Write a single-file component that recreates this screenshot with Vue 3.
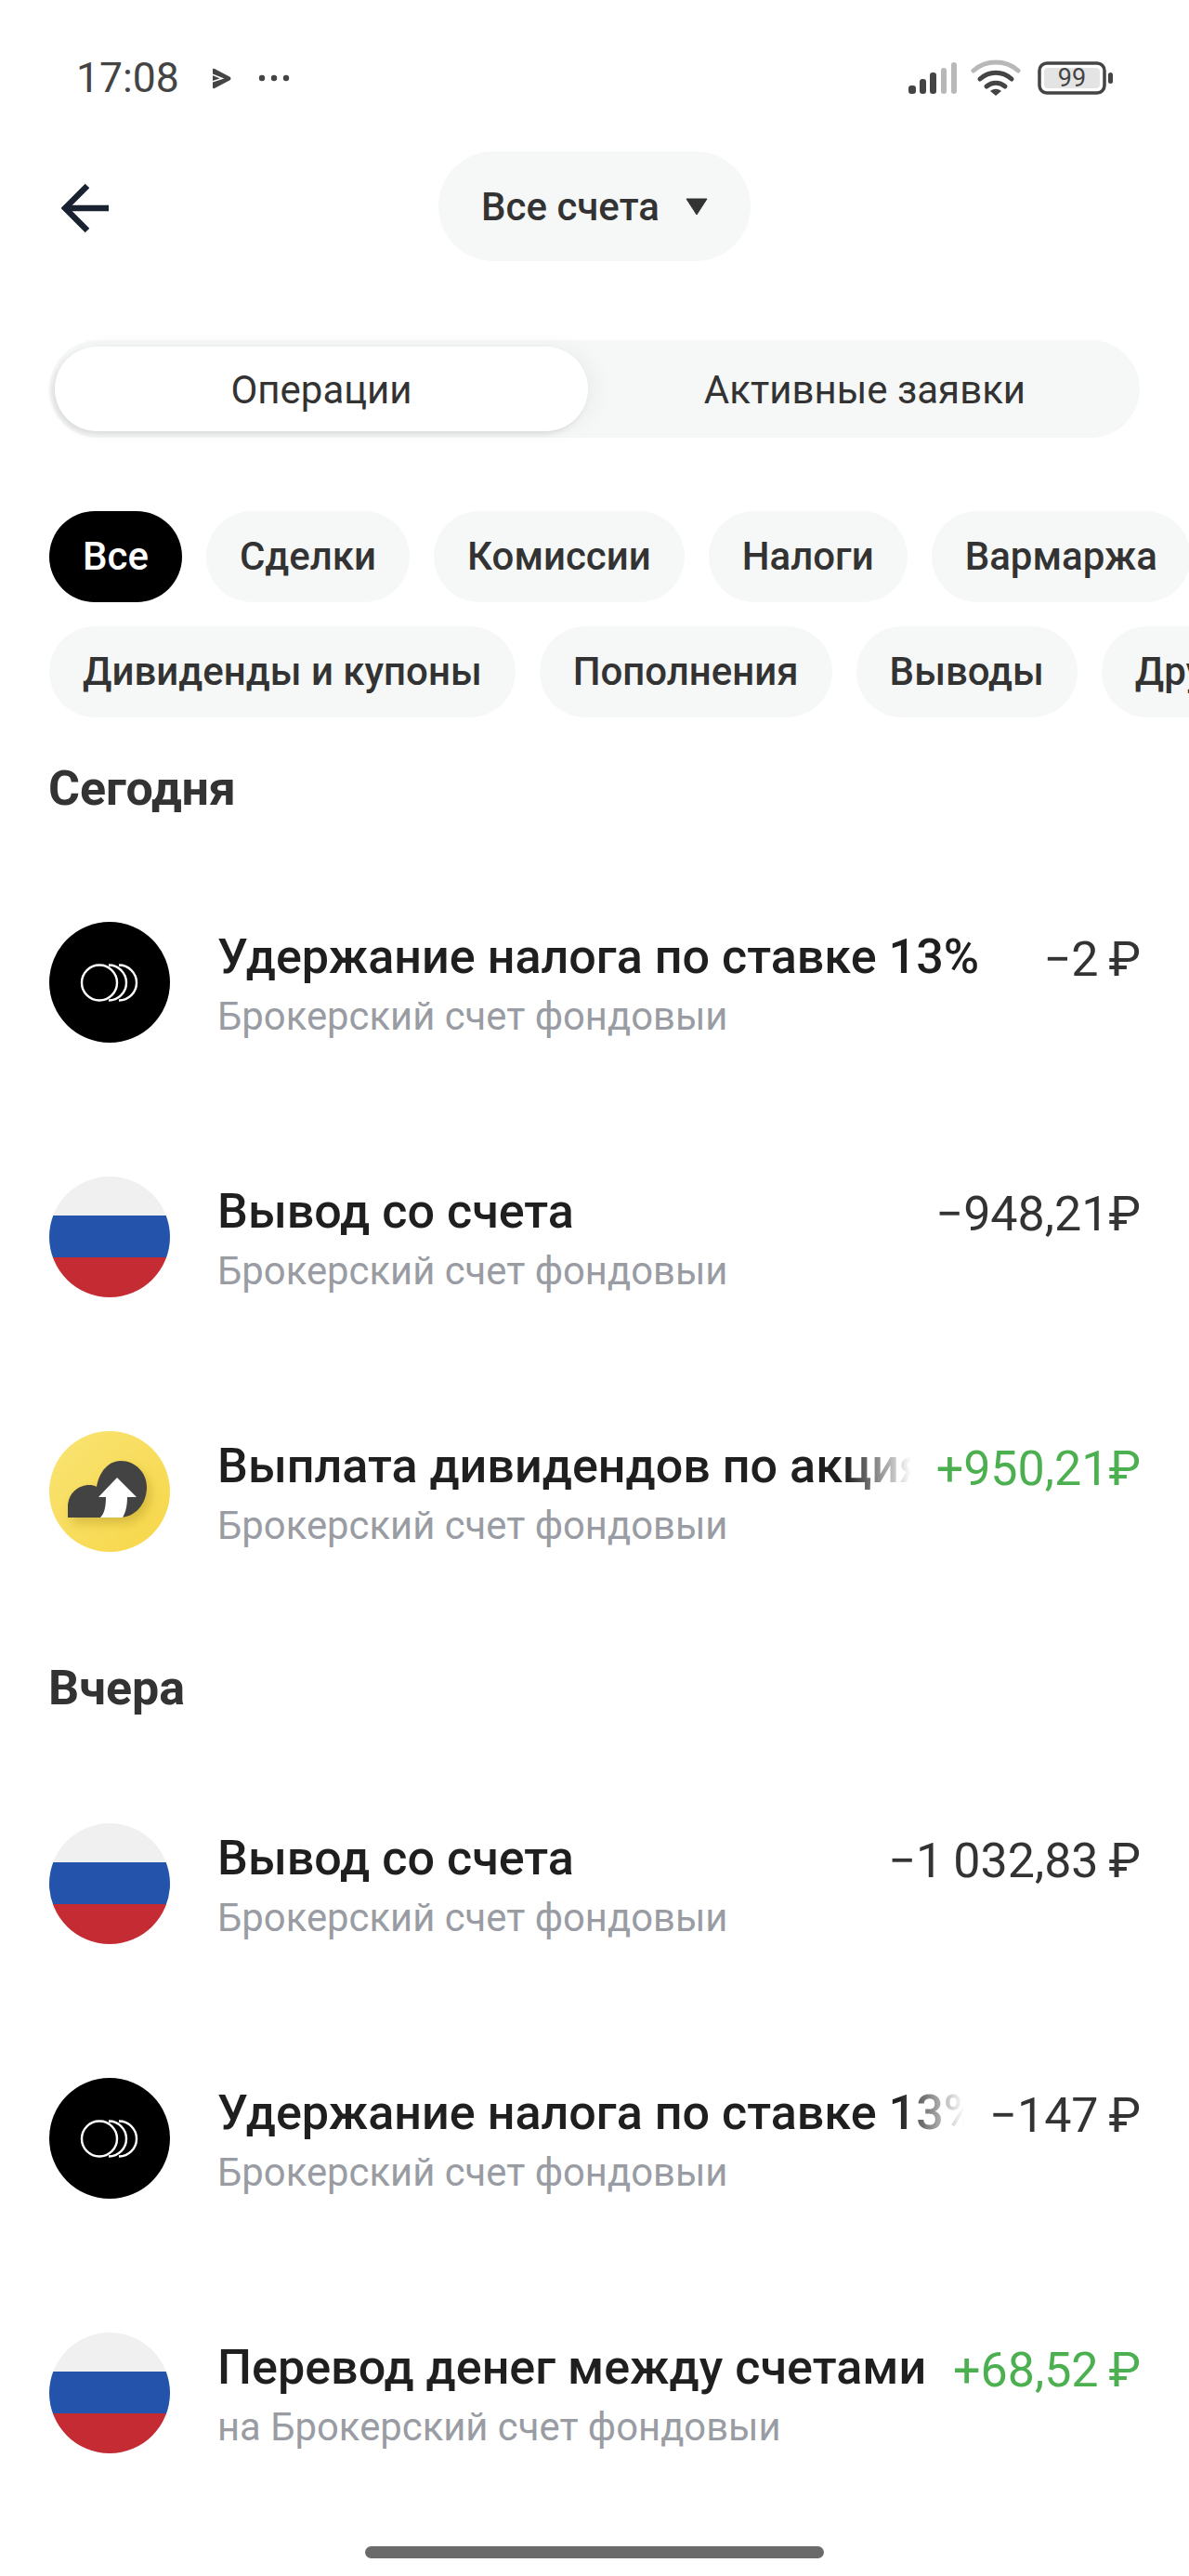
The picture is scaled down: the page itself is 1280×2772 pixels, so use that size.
<script setup>
const row1 = ['Все', 'Сделки', 'Комиссии', 'Налоги', 'Вармаржа']
const row2 = ['Дивиденды и купоны', 'Пополнения', 'Выводы', 'Другое']
const sections = [
  {
    title: 'Сегодня',
    rows: [
      { icon: 'coins', name: 'Удержание налога по ставке 13%', sub: 'Брокерский счет фондовыи', amount: '−2 ₽' },
      { icon: 'flag', name: 'Вывод со счета', sub: 'Брокерский счет фондовыи', amount: '−948,21₽' },
      { icon: 'cloud', name: 'Выплата дивидендов по акциям', sub: 'Брокерский счет фондовыи', amount: '+950,21₽', plus: true, fade: true },
    ],
  },
  {
    title: 'Вчера',
    rows: [
      { icon: 'flag', name: 'Вывод со счета', sub: 'Брокерский счет фондовыи', amount: '−1 032,83 ₽' },
      { icon: 'coins', name: 'Удержание налога по ставке 13%', sub: 'Брокерский счет фондовыи', amount: '−147 ₽', fade: true },
      { icon: 'flag', name: 'Перевод денег между счетами', sub: 'на Брокерский счет фондовыи', amount: '+68,52 ₽', plus: true },
    ],
  },
]
</script>

<template>
  <div class="page">
    <div class="status">
      <span class="time">17:08</span>
      <svg class="play" width="21" height="23" viewBox="0 0 21 23">
        <path d="M1 2 Q1 0 3 1 L20 10 Q21 11.500 20 13 L3 22 Q1 23 1 21Z" fill="#444"/>
        <path d="M0 7 L11 11.500 L0 15" fill="none" stroke="#fff" stroke-width="1.600"/>
      </svg>
      <svg class="dots" width="34" height="8" viewBox="0 0 34 8"><circle cx="4" cy="4" r="3.200" fill="#444"/><circle cx="17" cy="4" r="3.200" fill="#444"/><circle cx="30" cy="4" r="3.200" fill="#444"/></svg>
      <span class="spacer"></span>
      <svg width="53" height="34" viewBox="0 0 53 34">
        <rect x="0" y="25" width="8" height="9" rx="3" fill="#444"/>
        <rect x="12" y="18" width="7" height="16" rx="3" fill="#444"/>
        <rect x="23" y="11" width="7" height="23" rx="3" fill="#444"/>
        <rect x="35" y="6" width="6" height="28" rx="3" fill="#b8b8b8"/>
        <rect x="46" y="0" width="6" height="34" rx="3" fill="#b8b8b8"/>
      </svg>
      <svg class="wifi" width="54" height="40" viewBox="0 0 54 40" fill="none" stroke-linecap="round">
        <path d="M3 12 C16 0 38 0 51 12" stroke="#b8b8b8" stroke-width="5"/>
        <path d="M10 21 C20 12 34 12 44 21" stroke="#444" stroke-width="5"/>
        <path d="M17 29 C23 24 31 24 37 29" stroke="#444" stroke-width="5"/>
        <path d="M27 39 L21 34 C25 31 29 31 33 34Z" fill="#444"/>
      </svg>
      <svg class="batt" width="82" height="36" viewBox="0 0 82 36">
        <rect x="2" y="2" width="70" height="32" rx="8" fill="#fff" stroke="#444" stroke-width="3.500"/>
        <rect x="7" y="7" width="60" height="22" rx="4" fill="#e4e4e4"/>
        <text x="37" y="27" text-anchor="middle" class="batt-text">99</text>
        <rect x="76" y="12" width="5" height="12" rx="2.500" fill="#444"/>
      </svg>
    </div>

    <div class="nav">
      <svg class="back" width="54" height="54" viewBox="0 0 54 54" fill="none" stroke="#1a2130" stroke-width="6.500">
        <path d="M28 3 L4 27 L28 51"/>
        <path d="M4 27 H51"/>
      </svg>
      <div class="account">
        <span>Все счета</span>
        <svg width="24" height="19" viewBox="0 0 24 19"><path d="M1 1 H23 L12 18Z" fill="#333" stroke="#333" stroke-linejoin="round" stroke-width="1"/></svg>
      </div>
    </div>

    <div class="tabs">
      <div class="tab active">Операции</div>
      <div class="tab other">Активные заявки</div>
    </div>

    <div class="chips">
      <span v-for="(c, i) in row1" :key="c" class="chip" :class="{ on: i === 0 }">{{ c }}</span>
    </div>
    <div class="chips second">
      <span v-for="c in row2" :key="c" class="chip">{{ c }}</span>
    </div>

    <section v-for="s in sections" :key="s.title" class="section">
      <h2 class="heading">{{ s.title }}</h2>
      <div v-for="r in s.rows" :key="r.name + r.amount" class="row">
        <svg v-if="r.icon === 'coins'" class="ico" viewBox="0 0 130 130">
          <circle cx="65" cy="65" r="65" fill="#000"/>
          <g fill="none" stroke="#fff" stroke-width="2.400">
            <path d="M75 46.500 A19 19 0 0 1 75 84.500"/>
            <path d="M64 46.500 A19 19 0 0 1 64 84.500"/>
            <circle cx="54" cy="65.500" r="19"/>
          </g>
        </svg>
        <svg v-else-if="r.icon === 'flag'" class="ico" viewBox="0 0 130 130">
          <defs><clipPath id="fc"><circle cx="65" cy="65" r="65"/></clipPath></defs>
          <g clip-path="url(#fc)">
            <rect width="130" height="43" fill="#f0f0f0"/>
            <rect y="42" width="130" height="46" fill="#2353ab"/>
            <rect y="87" width="130" height="43" fill="#c42b32"/>
          </g>
        </svg>
        <svg v-else class="ico" viewBox="0 0 130 130">
          <defs>
            <linearGradient id="gold" x1="0" y1="0" x2="1" y2="1"><stop offset="0" stop-color="#f9e474"/><stop offset="1" stop-color="#f7d648"/></linearGradient>
            <filter id="sh" x="-30%" y="-30%" width="160%" height="160%"><feGaussianBlur stdDeviation="6"/></filter>
          </defs>
          <circle cx="65" cy="65" r="65" fill="url(#gold)"/>
          <path d="M20 93 V82 C20 67 31 58 43 58 C46 58 49 58.500 51 60 C54 43 64 32 77 32 C93 32 105 45 105 60 C105 78 93 93 75 93Z" fill="#9a7f10" opacity=".35" filter="url(#sh)" transform="translate(4 6)"/>
          <path d="M20 93 V82 C20 67 31 58 43 58 C46 58 49 58.500 51 60 C54 43 64 32 77 32 C93 32 105 45 105 60 C105 78 93 93 75 93Z" fill="#434343"/>
          <path d="M73 50 L94 71 H84 C84 81 82 88 79 93 H55 C59 89 61 82 61 71 H53Z" fill="#fff"/>
        </svg>
        <div class="body">
          <div class="name" :class="{ fade: r.fade }">{{ r.name }}</div>
          <div class="sub">{{ r.sub }}</div>
        </div>
        <div class="amount" :class="{ plus: r.plus }">{{ r.amount }}</div>
      </div>
    </section>

    <div class="home"></div>
  </div>
</template>

<style>
html, body { margin: 0; background: #fff; }
</style>

<style scoped>
.page {
  width: 1280px;
  height: 2772px;
  overflow: hidden;
  position: relative;
  background: #fff;
  font-family: Roboto, "Noto Sans", sans-serif;
  color: #333;
}
.status {
  height: 40px;
  padding: 64px 81px 0 82px;
  display: flex;
  align-items: center;
}
.time { font-size: 44.500px; line-height: 40px; color: #444; }
.play { margin-left: 35px; }
.dots { margin-left: 29px; }
.spacer { flex: 1; }
.wifi { margin-left: 14px; }
.batt { margin-left: 18px; }
.batt-text { font-size: 27px; fill: #444; font-family: Roboto, sans-serif; }

.nav {
  margin-top: 59px;
  height: 118px;
  display: flex;
  justify-content: center;
  position: relative;
}
.back { position: absolute; left: 66px; top: 34px; }
.account {
  width: 336px;
  box-sizing: border-box;
  padding: 0 46px;
  background: #f6f8f7;
  border-radius: 59px;
  display: flex;
  align-items: center;
  justify-content: space-between;
  font-size: 42px;
  font-weight: 500;
  color: #333;
}

.tabs {
  margin: 85px 53px 0 53px;
  height: 105px;
  box-sizing: border-box;
  padding: 7px 6px 7px;
  border-radius: 53px;
  background: #f6f8f7;
  display: flex;
}
.tab {
  flex: 1;
  display: flex;
  align-items: center;
  justify-content: center;
  padding-top: 2px;
  font-size: 42px;
  color: #333;
  border-radius: 46px;
}
.tab.other { padding-left: 8px; }
.tab.active {
  flex: 0 0 574px;
  background: #fff;
  box-shadow: -3px 3px 6px rgba(0, 0, 0, .1), 10px 0 22px rgba(0, 0, 0, .04);
}

.chips {
  margin-top: 79px;
  padding-left: 53px;
  display: flex;
  gap: 26px;
  white-space: nowrap;
  overflow: hidden;
}
.chips.second { margin-top: 26px; }
.chip {
  height: 98px;
  flex: none;
  padding: 0 36px;
  border-radius: 49px;
  background: #f6f8f7;
  font-size: 42px;
  font-weight: 500;
  line-height: 98px;
  color: #333;
}
.chip.on { background: #000; color: #fff; }

.section { padding: 0 52px 0 53px; }
.section:nth-of-type(1) { margin-top: 45px; }
.section:nth-of-type(2) { margin-top: 43px; }
.heading {
  margin: 0 0 39px -1px;
  height: 64px;
  font-size: 52px;
  line-height: 64px;
  font-weight: 700;
  color: #333;
}
.section:nth-of-type(2) .heading { margin-bottom: 41px; }
.row {
  height: 274px;
  display: flex;
  align-items: center;
}
.ico { width: 130px; height: 130px; flex: none; }
.body { flex: 1; min-width: 0; margin-left: 51px; padding-top: 10px; }
.name {
  font-size: 52.100px;
  line-height: 60px;
  font-weight: 500;
  color: #1f1f1f;
  white-space: nowrap;
  overflow: hidden;
}
.name.fade {
  -webkit-mask-image: linear-gradient(90deg, #000 calc(100% - 70px), transparent 100%);
  mask-image: linear-gradient(90deg, #000 calc(100% - 70px), transparent 100%);
}
.sub {
  margin-top: 4px;
  font-size: 41.800px;
  line-height: 60px;
  color: #999ca3;
  white-space: nowrap;
}
.amount {
  flex: none;
  align-self: flex-start;
  margin: 83px 0 0 27px;
  font-size: 52px;
  line-height: 60px;
  word-spacing: -2px;
  color: #333;
}
.amount.plus { color: #4caf50; }
.home {
  position: absolute;
  left: 393px;
  top: 2740px;
  width: 494px;
  height: 13px;
  border-radius: 7px;
  background: #6a6a6a;
}
</style>
